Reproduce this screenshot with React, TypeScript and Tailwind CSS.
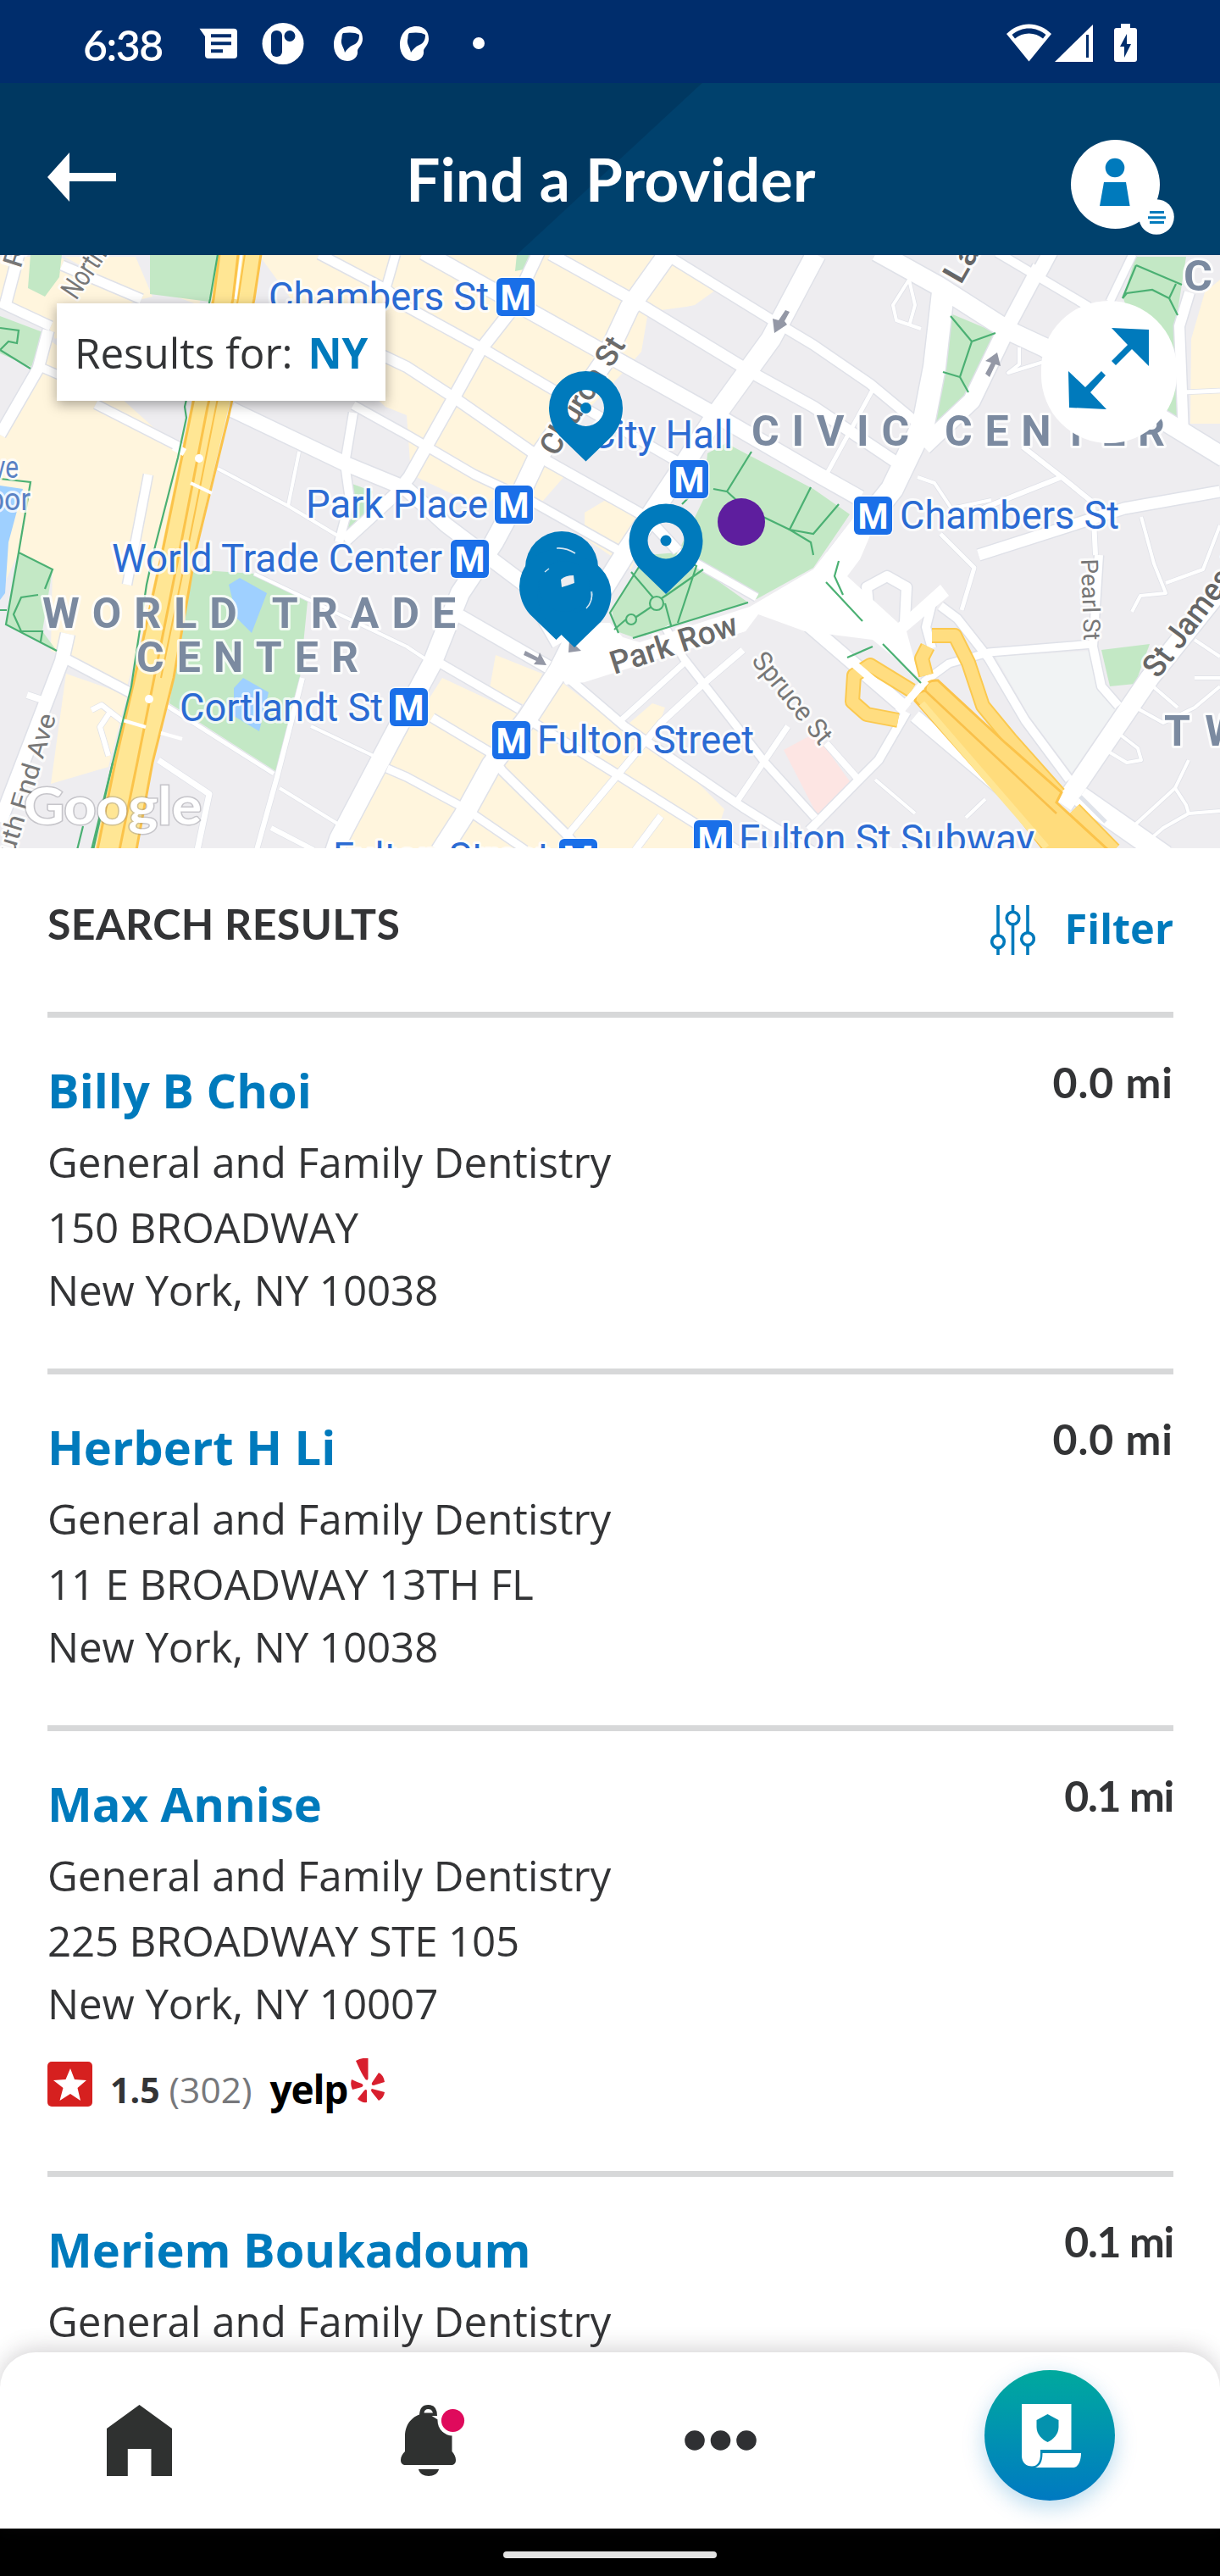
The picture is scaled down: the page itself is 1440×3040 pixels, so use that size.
import React from "react";

type Pt = string;

/* ---------- Map data (map canvas units) ---------- */

const cream: Pt[] = [
  "0,303 70,303 165,353 65,400 57,385 0,357",
  "76,303 160,303 180,350 168,353",
  "57,400 110,440 215,535 180,700 150,810 78,775 60,768 62,672 22,652 0,700 0,513",
  "78,795 150,820 128,905 60,925",
  "305,300 775,300 845,342 820,360 810,362 765,368 757,415 735,440 640,540 668,560 640,592 595,576 570,600 485,560 480,490 455,480 400,430",
  "690,605 715,590 765,620 745,672 690,635",
  "585,773 640,795 625,835 578,812",
  "522,800 612,842 660,803 735,860 770,830 785,835 772,872 855,955 840,1001 405,1001 440,920 490,850",
  "1440,330 1422,345 1406,400 1405,500 1440,500",
  "205,300 250,300 235,360 180,340",
];

const green: Pt[] = [
  "36,300 73,300 70,327 53,350 33,340",
  "177,300 257,300 247,356 177,347",
  "0,373 53,393 37,433 0,417",
  "857,523 960,577 1003,607 960,670 893,707 800,652 830,590 835,535",
  "763,655 722,720 728,745 750,753 883,711 800,652",
  "225,672 300,677 363,710 353,810 330,913 200,830",
  "22,652 62,672 50,745 67,768 7,737",
  "1122,370 1177,393 1140,473 1097,507",
  "1340,303 1400,303 1388,380 1392,510 1370,490 1326,352",
  "1300,767 1357,760 1340,807 1310,810",
  "413,570 440,580 425,632 408,636",
  "610,300 625,300 618,318 608,320",
  "975,690 985,678 997,705",
];

const water: Pt[] = [
  "0,573 27,577 10,640 6,700 0,708",
  "270,690 283,682 315,700 297,747 280,730",
  "276,812 287,800 317,817 306,863 276,845",
];

type Road = [number, string];

const roads: Road[] = [
  [18, "500,297 850,493 960,557 1015,588"],
  [13, "650,300 740,350 893,443 960,480 1060,547"],
  [11, "790,303 910,377 960,407 1027,453 1080,497"],
  [11, "377,300 457,342 480,362 573,413 653,460 800,545"],
  [12, "400,395 480,433 537,470 633,537 763,610 800,650"],
  [10, "417,478 480,513 560,560 630,593 740,655"],
  [17, "273,483 407,547 480,577 527,620 620,690 660,760"],
  [10, "113,477 217,530"],
  [11, "73,313 167,353"],
  [11, "0,357 60,385"],
  [9, "45,432 75,445"],
  [4, "257,553 340,597 400,633"],
  [4, "300,677 363,707 480,763 510,783"],
  [15, "543,727 647,787"],
  [10, "667,797 737,857 877,953 965,1008"],
  [10, "520,783 613,837"],
  [10, "630,853 727,913 813,967 870,1003"],
  [10, "510,847 577,887 593,910 667,983 684,1003"],
  [9, "457,907 480,917 547,953 620,1003"],
  [4, "367,857 443,893"],
  [4, "330,930 400,973"],
  [7, "187,897 247,937 233,1003"],
  [6, "320,977 370,1003"],
  [5, "197,833 323,913"],
  [11, "77,777 153,817 180,827"],
  [22, "790,297 743,363 713,427 633,543 617,577 583,640 543,700 510,783 467,863 400,990 395,1005"],
  [14, "636,297 603,367 567,413 537,467 483,563 465,585 407,638"],
  [23, "963,300 910,400 847,487 800,560 740,650 690,730 660,790 623,847 580,903 547,963 520,1005"],
  [10, "417,487 407,547 413,590 400,640"],
  [4, "353,533 340,597"],
  [13, "57,390 45,435 0,513"],
  [13, "22,300 7,357"],
  [10, "467,300 455,342"],
  [16, "80,748 73,780 0,970"],
  [8, "32,820 50,826"],
  [6, "357,800 327,917 303,1003"],
  [10, "175,560 150,690"],
  [6, "108,838 120,832 143,850 130,840 118,858 128,892"],
  [9, "785,740 807,777 903,900 962,965"],
  [8, "877,767 830,807 780,853 727,917 672,983"],
  [7, "807,783 733,850"],
  [7, "930,857 867,950"],
  [8, "780,963 750,1003"],
  [9, "800,652 893,705"],
  [26, "1113,345 1103,433 1090,500 1053,577 987,660"],
  [20, "1187,390 1147,473 1090,527"],
  [17, "1227,315 1187,390"],
  [17, "1240,297 1225,325"],
  [22, "1035,297 1107,337 1190,390 1233,410 1380,500 1445,540"],
  [10, "1177,298 1285,362"],
  [9, "1337,300 1310,356"],
  [12, "1404,345 1392,385 1397,513"],
  [5, "1396,463 1440,461"],
  [6, "1207,527 1253,563 1290,593 1293,655"],
  [6, "1253,563 1160,600"],
  [13, "1155,655 1327,600 1440,580"],
  [4, "1073,330 1054,360 1058,378 1087,388 M 1073,330 1080,360 1073,385"],
  [5, "1030,460 977,557"],
  [4, "1083,563 1103,570 1123,600 1170,590"],
  [4, "1203,410 1203,430 1190,440 1235,426"],
  [4, "1347,610 1362,665 1376,700 1346,703 1336,722"],
  [4, "1376,688 1420,672 1440,620"],
  [4, "1337,833 1373,853 1410,835 1440,810"],
  [4, "1317,863 1343,883 1347,897 1330,900 1305,885"],
  [4, "1403,897 1387,930 1400,950 1403,960"],
  [4, "1440,957 1403,960 1373,977 1343,1003"],
  [4, "1387,930 1340,973"],
  [4, "1355,805 1390,835 M 1410,755 1440,775 M 1410,800 1440,800"],
  [10, "1297,655 1290,763 1300,810 1320,833"],
  [9, "1090,805 1120,783 1167,770 1290,760"],
  [10, "1110,715 1130,730 1167,777 1210,850 1262,920"],
  [10, "1100,712 1093,740 1100,765"],
  [5, "1110,630 1150,670 1135,720"],
  [16, "955,738 1070,837"],
  [15, "1080,845 1210,955 1255,1003"],
  [10, "1070,840 1037,897 1017,917 955,980"],
  [8, "975,877 1015,922"],
  [4, "1033,920 1080,960 M 1163,943 1140,965"],
  [22, "1445,690 1357,800 1255,950"],
  [24, "1275,940 1375,1010"],
  [12, "1027,735 1023,693 1047,680 1070,693 1068,735"],
];

const plazas: Pt[] = [
  "655,790 690,735 720,735 735,752 755,758 885,716 960,672 1012,605 1045,590 1015,660 1000,680 1060,735 1110,690 1120,703 1070,745 1085,800 1030,755 950,745 895,725 880,745 690,805 668,808",
];

const trails: string[] = [
  "257,300 248,353 218,480 220,493 210,540 183,645 173,690 155,810 133,900 110,1003",
  "133,900 108,1003 M 98,975 91,1003",
  "0,565 36,569 22,652 62,672 53,695 M 22,652 7,737 67,768 M 45,702 25,705 16,725 25,745 50,745 48,757 M 0,720 8,720",
  "0,387 22,390 20,405 10,403 0,413 36,435",
  "887,533 858,580 842,577 M 858,580 880,600 932,625 957,640 960,655 M 957,575 932,625 960,630 990,595 M 820,580 805,595",
  "763,655 720,723 730,747 M 745,675 775,710 790,700 830,672 M 775,712 745,732 M 800,655 822,668 800,735 M 785,712 792,738 M 747,753 883,711 M 725,743 740,730",
  "1122,373 1147,403 1133,445 1143,463 M 1175,393 1147,403 M 1113,439 1133,445",
  "1341,313 1395,336 M 1341,313 1325,352 1330,346 1360,342 1380,352 1388,335 M 1380,352 1390,372",
  "975,687 1018,733 M 990,662 985,680 995,702 M 1042,760 1087,806 M 1000,776 1030,763",
];

/* ---------- Map pieces ---------- */

function MetroBadge({ x, y }: { x: number; y: number }) {
  return (
    <g>
      <rect x={x - 1.5} y={y - 1.5} width="48" height="48" rx="8" fill="#fff" opacity="0.8" />
      <rect x={x} y={y} width="45" height="45" rx="6" fill="#1a6fe8" />
      <text x={x + 22.5} y={y + 38} fill="#fff" fontSize="43" fontWeight="700" textAnchor="middle" textLength="36" lengthAdjust="spacingAndGlyphs">
        M
      </text>
    </g>
  );
}

interface LabelProps {
  x: number;
  y: number;
  w: number;
  size?: number;
  fill?: string;
  weight?: number;
  rot?: number;
  glyphs?: boolean;
  children: string;
}

function Label({ x, y, w, size = 46, fill = "#2b6bd3", weight = 400, rot = 0, glyphs = true, children }: LabelProps) {
  return (
    <text
      x={x}
      y={y}
      fontSize={size}
      fontWeight={weight}
      fill={fill}
      stroke="#fff"
      strokeOpacity="0.8"
      strokeWidth="6"
      strokeLinejoin="round"
      paintOrder="stroke"
      textLength={w}
      lengthAdjust={glyphs ? "spacingAndGlyphs" : "spacing"}
      transform={`rotate(${rot} ${x} ${y})`}
    >
      {children}
    </text>
  );
}

function Pin({ x, y }: { x: number; y: number }) {
  return (
    <g transform={`translate(${x} ${y})`} fill="#007abc">
      <path
        fillRule="evenodd"
        d="M0 63 L-31 33 C-39 24 -43.5 12 -43.5 0 A43.5 43.5 0 0 1 43.5 0 C43.5 12 39 24 31 33 Z M0 -21.5 A21.5 21.5 0 1 0 0 21.5 A21.5 21.5 0 1 0 0 -21.5 Z"
      />
      <circle r="6.5" />
    </g>
  );
}

function CityMap() {
  const district = "#7b8aa0";
  return (
    <svg viewBox="0 301 1440 700" className="block h-[700px] w-full" fontFamily="Roboto, sans-serif">
      <rect x="0" y="300" width="1440" height="702" fill="#eeedf0" />
      {cream.map((p) => (
        <polygon key={p} points={p} fill="#fff5dd" />
      ))}
      <polygon points="1175,775 1288,768 1300,815 1318,835 1265,912 1215,845" fill="#f1f3f4" />
      <polygon points="925,885 962,865 1005,925 965,963" fill="#fde5e3" />
      {green.map((p) => (
        <polygon key={p} points={p} fill="#c3e8c5" />
      ))}
      {water.map((p) => (
        <polygon key={p} points={p} fill="#9fd0ff" />
      ))}
      <g fill="none" strokeLinejoin="round">
        {roads.map(([w, d]) => (
          <path key={d} d={`M ${d}`} stroke="#dfe1e8" strokeWidth={w + (w > 8 ? 3 : 1.5)} />
        ))}
        {plazas.map((p) => (
          <polygon key={p} points={p} fill="#fff" stroke="none" />
        ))}
        {roads.map(([w, d]) => (
          <path key={d} d={`M ${d}`} stroke="#fff" strokeWidth={w} />
        ))}
      </g>

      {/* West Side Highway */}
      <polygon points="257,300 308,300 300,353 270,480 230,650 205,800 180,900 160,1003 112,1003 133,900 157,800 190,650 225,480 250,353" fill="#ffe694" />
      <g fill="none" stroke="#fbc34a" strokeWidth="3">
        <path d="M259,300 252,353 227,480 192,650 159,800 136,900 115,1003" />
        <path d="M308,300 300,353 270,490 231,650 205,800 180,900 161,1003" />
        <path d="M281,300 275,353 245,480 212,650 182,800 162,900 141,1003" />
        <path d="M289,300 281,353 255,480 221,650 190,800" strokeWidth="2" />
      </g>
      <path d="M285,300 278,353" stroke="#fff" strokeWidth="3" />
      <g stroke="#fff" fill="none">
        <path d="M205,527 218,534" strokeWidth="9" />
        <path d="M225,570 250,582" strokeWidth="4" />
        <path d="M145,850 172,858 M190,865 215,872" strokeWidth="4" />
      </g>
      <circle cx="235" cy="541" r="5" fill="#fff" />
      <circle cx="176" cy="825" r="5" fill="#fff" />

      {/* Bridge approach and ramps */}
      <g fill="none" strokeLinejoin="round">
        <g stroke="#fbc94f" strokeWidth="18">
          <path d="M1100,750 1127,750 1143,782 1160,833 1193,873 1250,937" />
          <path d="M1093,797 1088,777 1095,763" />
          <path d="M1076,815 1027,785 1008,797 1006,828 1023,843 1060,850" />
          <path d="M1268,955 1315,1003" />
        </g>
        <g stroke="#ffdd80" strokeWidth="14">
          <path d="M1100,750 1127,750 1143,782 1160,833 1193,873 1250,937" />
          <path d="M1093,797 1088,777 1095,763" />
          <path d="M1076,815 1027,785 1008,797 1006,828 1023,843 1060,850" />
          <path d="M1268,955 1315,1003" />
        </g>
      </g>
      <path d="M1080,827 Q1080,817 1092,815 Q1092,802 1107,803 L1187,877 1253,935 1247,947 1308,1003 1232,1003 1200,962 Z" fill="#ffdc7c" stroke="#fbc34a" strokeWidth="3" />
      <path d="M1092,815 L1247,960" stroke="#f9c04a" strokeWidth="2.5" fill="none" />
      <path d="M1088,830 L1235,1000" stroke="#ffe694" strokeWidth="8" fill="none" />
      <path d="M955,738 1070,837 M1093,803 1060,840" stroke="#fff" strokeWidth="9" fill="none" />
      <path d="M1275,940 1305,970" stroke="#dfe3ea" strokeWidth="5" />

      <g fill="none" stroke="#4bb073" strokeWidth="2.2">
        {trails.map((d) => (
          <path key={d} d={`M ${d}`} />
        ))}
        <circle cx="775" cy="712" r="8" fill="#c3e8c5" />
        <circle cx="745" cy="731" r="6" fill="#c3e8c5" />
      </g>

      {/* One-way arrows */}
      <g fill="#9498a6">
        <path d="M932,368 L926,379 L929,383 L914,393 L912,376 L919,378 L927,366 Z" />
        <path d="M1163,441 L1170,428 L1163,426 L1177,416 L1181,432 L1175,430 L1168,445 Z" />
        <path d="M620,768 L635,776 L637,770 L645,785 L630,784 L633,780 L618,773 Z" />
        <path d="M672,755 L686,768 L671,770 Z" />
      </g>

      {/* Street names */}
      <Label x={24} y={318} w={24} size={32} fill="#777" rot={-72}>R</Label>
      <Label x={90} y={355} w={88} size={34} fill="#777" rot={-56}>North E</Label>
      <Label x={656} y={540} w={157} size={36} fill="#6b6b6b" rot={-58} weight={500}>Church St</Label>
      <Label x={1134} y={337} w={62} size={38} fill="#666" rot={-60} weight={500}>Laf</Label>
      <Label x={725} y={796} w={156} size={38} fill="#6b6b6b" rot={-18} weight={500}>Park Row</Label>
      <Label x={886} y={780} w={130} size={32} fill="#777" rot={51}>Spruce St</Label>
      <Label x={1276} y={660} w={96} size={28} fill="#777" rot={88}>Pearl St</Label>
      <Label x={1367} y={802} w={190} size={38} fill="#666" rot={-53} weight={500}>St James Pl</Label>
      <Label x={16} y={1010} w={172} size={30} fill="#777" rot={-73}>uth End Ave</Label>

      {/* Districts */}
      <Label x={50} y={741} w={488} size={50} fill={district} weight={700} glyphs={false}>WORLD TRADE</Label>
      <Label x={161} y={793} w={262} size={50} fill={district} weight={700} glyphs={false}>CENTER</Label>
      <Label x={887} y={526} w={488} size={50} fill={district} weight={700} glyphs={false}>CIVIC CENTER</Label>
      <Label x={1397} y={343} w={34} size={50} fill={district} weight={700}>C</Label>
      <Label x={1374} y={880} w={92} size={50} fill={district} weight={700} glyphs={false}>TW</Label>

      {/* Stations */}
      <Label x={317} y={366} w={260}>Chambers St</Label>
      <MetroBadge x={586} y={328} />
      <Label x={697} y={529} w={168}>City Hall</Label>
      <MetroBadge x={791} y={543} />
      <Label x={361} y={611} w={215}>Park Place</Label>
      <MetroBadge x={584} y={573} />
      <Label x={132} y={675} w={390}>World Trade Center</Label>
      <MetroBadge x={532} y={637} />
      <Label x={1062} y={624} w={259}>Chambers St</Label>
      <MetroBadge x={1008} y={586} />
      <Label x={212} y={851} w={240}>Cortlandt St</Label>
      <MetroBadge x={460} y={812} />
      <Label x={634} y={889} w={256}>Fulton Street</Label>
      <MetroBadge x={581} y={851} />
      <Label x={393} y={1027} w={256}>Fulton Street</Label>
      <MetroBadge x={660} y={990} />
      <Label x={872} y={1006} w={349}>Fulton St Subway</Label>
      <MetroBadge x={819} y={968} />
      <Label x={-8} y={564} w={30} size={36} fill="#5b82c4">ve</Label>
      <Label x={-14} y={602} w={50} size={36} fill="#5b82c4">bor</Label>

      <text
        x="28"
        y="973"
        fontFamily="Lato, sans-serif"
        fontSize="61"
        fontWeight="700"
        fill="#fff"
        stroke="#8a8a90"
        strokeOpacity="0.4"
        strokeWidth="3"
        paintOrder="stroke"
        textLength="210"
        lengthAdjust="spacingAndGlyphs"
      >
        Google
      </text>

      <Pin x={691.5} y={481.5} />
      <Pin x={786} y={638} />
      <circle cx="663" cy="670" r="43" fill="#007abc" />
      <Pin x={656.5} y={692} />
      <Pin x={678} y={701} />
      <circle cx="666" cy="692" r="30" fill="#007abc" />
      <path d="M662,684 Q667,679 677,679 L678,688 Q670,691 663,693 Z" fill="#eeedf0" />
      <path d="M657,647 Q668,646 679,653 M643,675 L648,671 M698,698 Q700,710 692,718" stroke="#d5e6f2" strokeWidth="1.5" fill="none" />
      <circle cx="875" cy="616" r="28" fill="#5e1e9e" />
    </svg>
  );
}

/* ---------- Chrome ---------- */

function StatusBar() {
  return (
    <div className="flex h-[98px] shrink-0 items-center bg-[#002d6c] pl-[98px]">
      <span className="w-[96px] pt-[8px] font-['Lato'] text-[50px] leading-none font-semibold tracking-[-1.500px] text-white">6:38</span>
      <svg viewBox="230 0 1120 98" className="ml-[36px] h-[98px] w-[1120px]" fill="#fff">
        <path d="M235.5 33.7H276a4 4 0 0 1 4 4V65a4 4 0 0 1-4 4H246a4 4 0 0 1-4-4V43Z" />
        <path d="M249 42.3h24M249 51.3h24M249 60.3h14" stroke="#002d6c" strokeWidth="4" />
        <circle cx="334" cy="51.5" r="24.5" />
        <rect x="320" y="36" width="13" height="31" rx="6" fill="#002d6c" />
        <circle cx="342" cy="42.5" r="6.5" fill="#002d6c" />
        {[0, 78].map((dx) => (
          <g key={dx} transform={`translate(${dx} 0)`}>
            <path d="M413 31C424 31 428 38 428 46C428 53 422 57 422 60C423 66 418 72 410 72C400 72 394 63 394 53C394 40 402 31 413 31Z" />
            <path d="M405 39C412 38 420 38 424 41C424 47 422 51 417 53C412 55 409 59 407 62C406 56 402 53 403 47C404 44 403 41 405 39Z" fill="#002d6c" />
          </g>
        ))}
        <circle cx="565" cy="51" r="7" />
        <path d="M1214.500 72.500 1188 40C1203 24.500 1226 24.500 1241 40Z" />
        <path d="M1194.500 41C1206 31 1223 31 1234.500 41L1231 45.500C1222 37.500 1207 37.500 1198 45.500Z" fill="#002d6c" />
        <path d="M1290 29V73H1245Z" />
        <path d="M1283.500 41V68" stroke="#002d6c" strokeWidth="3" />
        <path d="M1323 28h11v5h5a3 3 0 0 1 3 3v34a3 3 0 0 1-3 3h-21a3 3 0 0 1-3-3V36a3 3 0 0 1 3-3h5Z" />
        <path d="M1330 40v12h5l-8 16v-13h-5Z" fill="#002d6c" />
      </svg>
    </div>
  );
}

function Header() {
  return (
    <header className="flex h-[203px] shrink-0 items-center justify-between bg-[linear-gradient(137.2deg,#003861_49.9%,#00416d_50%)] pr-[54px] pl-[56px]">
      <svg viewBox="0 0 81 58" className="mt-[18px] h-[58px] w-[81px]" fill="#fff">
        <path d="M0 29 26 0V24H81V34H26V58Z" />
      </svg>
      <h1 className="mt-[22px] ml-[42px] font-['Lato'] text-[71px] leading-none font-bold tracking-[0.400px] text-white">Find a Provider</h1>
      <svg viewBox="1263 166 123 113" className="mt-[44px] h-[113px] w-[123px]">
        <circle cx="1316.500" cy="218.500" r="52.500" fill="#fff" />
        <circle cx="1316" cy="199" r="11.300" fill="#007abc" />
        <path d="M1303 216h26l4.600 28h-35.600Z" fill="#007abc" />
        <circle cx="1365" cy="257" r="20.800" fill="#fff" />
        <path d="M1357 251.500h17M1355 257.700h21M1357 263.500h17" stroke="#007abc" strokeWidth="3" />
      </svg>
    </header>
  );
}

interface Provider {
  name: string;
  street: string;
  city: string;
  distance: string;
  rating?: string;
  reviews?: string;
}

const providers: Provider[] = [
  { name: "Billy B Choi", street: "150 BROADWAY", city: "New York, NY 10038", distance: "0.0 mi" },
  { name: "Herbert H Li", street: "11 E BROADWAY 13TH FL", city: "New York, NY 10038", distance: "0.0 mi" },
  { name: "Max Annise", street: "225 BROADWAY STE 105", city: "New York, NY 10007", distance: "0.1 mi", rating: "1.5", reviews: "(302)" },
  { name: "Meriem Boukadoum", street: "", city: "", distance: "0.1 mi" },
];

function YelpRating({ rating, reviews }: { rating: string; reviews: string }) {
  return (
    <div className="mt-[27px] flex h-[60px] items-start">
      <svg viewBox="0 0 53 53" className="mt-[6px] h-[53px] w-[53px]">
        <rect width="53" height="53" rx="5" fill="#d6201f" />
        <path d="M27 8 32 21 46 22 35.500 31 39 46 27 38 14.500 46 18.500 31 7 22 21.500 21Z" fill="#fff" />
      </svg>
      <span className="mt-[11px] ml-[21px] text-[41px] leading-[56px] font-bold">{rating}</span>
      <span className="mt-[11px] ml-[11px] text-[42.500px] leading-[56px] text-[#77787b]">{reviews}</span>
      <span className="mt-[9px] ml-[21px] w-[92px] text-[46px] leading-[58px] font-bold tracking-[-1.200px] text-black">yelp</span>
      <svg viewBox="414 2429 41 54" className="mt-[2px] ml-[3px] h-[54px] w-[41px]" fill="#d81f2e">
        <path d="M420 2432Q427 2428 434.500 2429V2453Q434 2456 431.500 2454Q427 2448 420 2432Z" />
        <path d="M415 2454Q421 2457 427 2459Q430 2461 427 2463L416 2466Q413 2460 415 2454Z" />
        <path d="M433 2467V2481Q427 2482 422 2477L430 2467Q432 2465 433 2467Z" />
        <path d="M439 2465L454 2469Q453 2476 447 2479L439 2469Q437 2466 439 2465Z" />
        <path d="M447 2446Q453 2449 454 2457L441 2461Q438 2461 439 2458Z" />
      </svg>
    </div>
  );
}

function ProviderRow({ p }: { p: Provider }) {
  const closeTracking = p.distance.includes("1");
  return (
    <article className={`${p.rating ? "h-[526px]" : "h-[421px]"} flex shrink-0 justify-between border-t-[7px] border-[#d7d8d9] pt-[47px]`}>
      <div className="text-[49.300px] leading-[76px] whitespace-nowrap">
        <h2 className="text-[56px] leading-[76px] font-bold text-[#007abc]">{p.name}</h2>
        <p className="mt-[9px]">General and Family Dentistry</p>
        <p className="pt-px leading-[76px] tracking-[-0.200px]">{p.street}</p>
        <p className="leading-[72px] tracking-[-0.100px]">{p.city}</p>
        {p.rating && p.reviews ? <YelpRating rating={p.rating} reviews={p.reviews} /> : null}
      </div>
      <span className={`${closeTracking ? "tracking-[-1.300px]" : "tracking-[1px]"} font-['Lato'] text-[50px] leading-[58px] font-bold`}>{p.distance}</span>
    </article>
  );
}

function BottomNav() {
  return (
    <nav className="relative flex h-[208px] shrink-0 items-start rounded-t-[42px] bg-white pl-[126px] shadow-[0_-4px_26px_rgba(60,50,60,0.22)]">
      <svg viewBox="0 0 77 84" className="mt-[62px] h-[84px] w-[77px]" fill="#2f3130">
        <path d="M38.500 0 77 28V84H52.500V52H24.800V84H0V28Z" />
      </svg>
      <svg viewBox="473 2838 76 84" className="mt-[62px] ml-[270px] h-[84px] w-[76px]" fill="#2f3130">
        <path d="M495 2851Q495 2838 505.500 2838Q516 2838 516 2851Z" />
        <path d="M500.500 2847.500Q501 2843 505.500 2843Q510 2843 511 2847.500Z" fill="#fff" />
        <path d="M505 2848C488 2848 478 2860 478 2875V2893C475 2896 473 2899 473 2903C473 2907 475 2909 479 2909H532C536 2909 538 2907 538 2903C538 2899 536 2896 533.500 2893V2866Z" />
        <path d="M494 2914H518C517 2919 512 2922 506 2922S495 2919 494 2914Z" />
        <circle cx="534.500" cy="2856.500" r="18" fill="#fff" />
        <circle cx="534.500" cy="2856.500" r="13.600" fill="#df0a5c" />
      </svg>
      <svg viewBox="0 0 86 24" className="mt-[92px] ml-[259px] h-[24px] w-[86px]" fill="#2f3033">
        <circle cx="12" cy="12" r="11.800" />
        <circle cx="42.500" cy="12" r="11.800" />
        <circle cx="73" cy="12" r="11.800" />
      </svg>
      <div className="mt-[21px] ml-[268px] flex h-[154px] w-[154px] items-center justify-center rounded-full bg-linear-to-b from-[#00a99d] to-[#0079c1] shadow-[0_8px_26px_rgba(0,121,193,0.28)]">
        <svg viewBox="1202 2836 72 77" className="ml-[3px] h-[77px] w-[72px]" fill="#fff">
          <path d="M1203 2837H1261.500V2891H1225V2896C1225 2906 1221 2910.500 1215 2910.500C1208 2910.500 1203 2906 1203 2898Z" />
          <path d="M1227.500 2895H1273C1273 2905 1269 2912 1264 2912H1219C1224 2910 1227.500 2906 1227.500 2895Z" />
          <path d="M1233.500 2849 1246.500 2856V2864C1246.500 2873 1240 2879 1233.500 2882C1227 2879 1220.500 2873 1220.500 2864V2856Z" fill="#0492ae" />
        </svg>
      </div>
    </nav>
  );
}

export default function App() {
  return (
    <div className="flex h-[3040px] w-[1440px] flex-col overflow-hidden bg-white font-['Open_Sans'] text-[#333436]">
      <StatusBar />
      <Header />
      <section className="relative h-[700px] shrink-0 overflow-hidden">
        <CityMap />
        <div className="absolute top-[57px] left-[67px] flex h-[115px] w-[388px] items-center bg-white pl-[21px] text-[49.300px] whitespace-nowrap shadow-[0_4px_14px_rgba(0,0,0,0.35)]">
          <span>Results for:</span>
          <span className="ml-[18px] font-bold text-[#007abc]">NY</span>
        </div>
        <div className="absolute top-[54px] left-[1229px] flex h-[168px] w-[160px] items-center justify-center rounded-full bg-white">
          <svg viewBox="1260 385 98 98" className="mb-[9px] h-[98px] w-[98px]" fill="#007abc">
            <path d="M1312 386 1356 388V431L1336 411 1317 430 1312 425 1331 406Z" />
            <path d="M1261 437 1281 456 1300 437 1305 442 1287 462 1306 482 1262 480Z" />
          </svg>
        </div>
      </section>
      <main className="flex min-h-0 flex-1 flex-col overflow-hidden pr-[55px] pl-[56px]">
        <div className="flex h-[193px] shrink-0 items-start justify-between">
          <h2 className="mt-[59px] font-['Lato'] text-[50px] leading-[60px] font-bold tracking-[0.400px]">SEARCH RESULTS</h2>
          <div className="mt-[59px] flex items-center text-[#007abc]">
            <svg viewBox="1169 1068 53 59" className="mt-[5px] h-[59px] w-[53px]" fill="none" stroke="currentColor" strokeWidth="3.600">
              <path d="M1178 1068V1103M1178 1119V1127M1195.500 1068V1075M1195.500 1091V1127M1213 1068V1100M1213 1116V1127" />
              <circle cx="1178" cy="1111.300" r="7.300" />
              <circle cx="1195.500" cy="1083.500" r="7.300" />
              <circle cx="1213" cy="1108" r="7.300" />
            </svg>
            <span className="ml-[35px] text-[48.700px] leading-[70px] font-bold">Filter</span>
          </div>
        </div>
        {providers.map((p) => (
          <ProviderRow key={p.name} p={p} />
        ))}
      </main>
      <BottomNav />
      <div className="flex h-[56px] shrink-0 items-center justify-center bg-black pt-[6px]">
        <div className="h-[8px] w-[252px] rounded-full bg-[#e4e4e4]" />
      </div>
    </div>
  );
}
